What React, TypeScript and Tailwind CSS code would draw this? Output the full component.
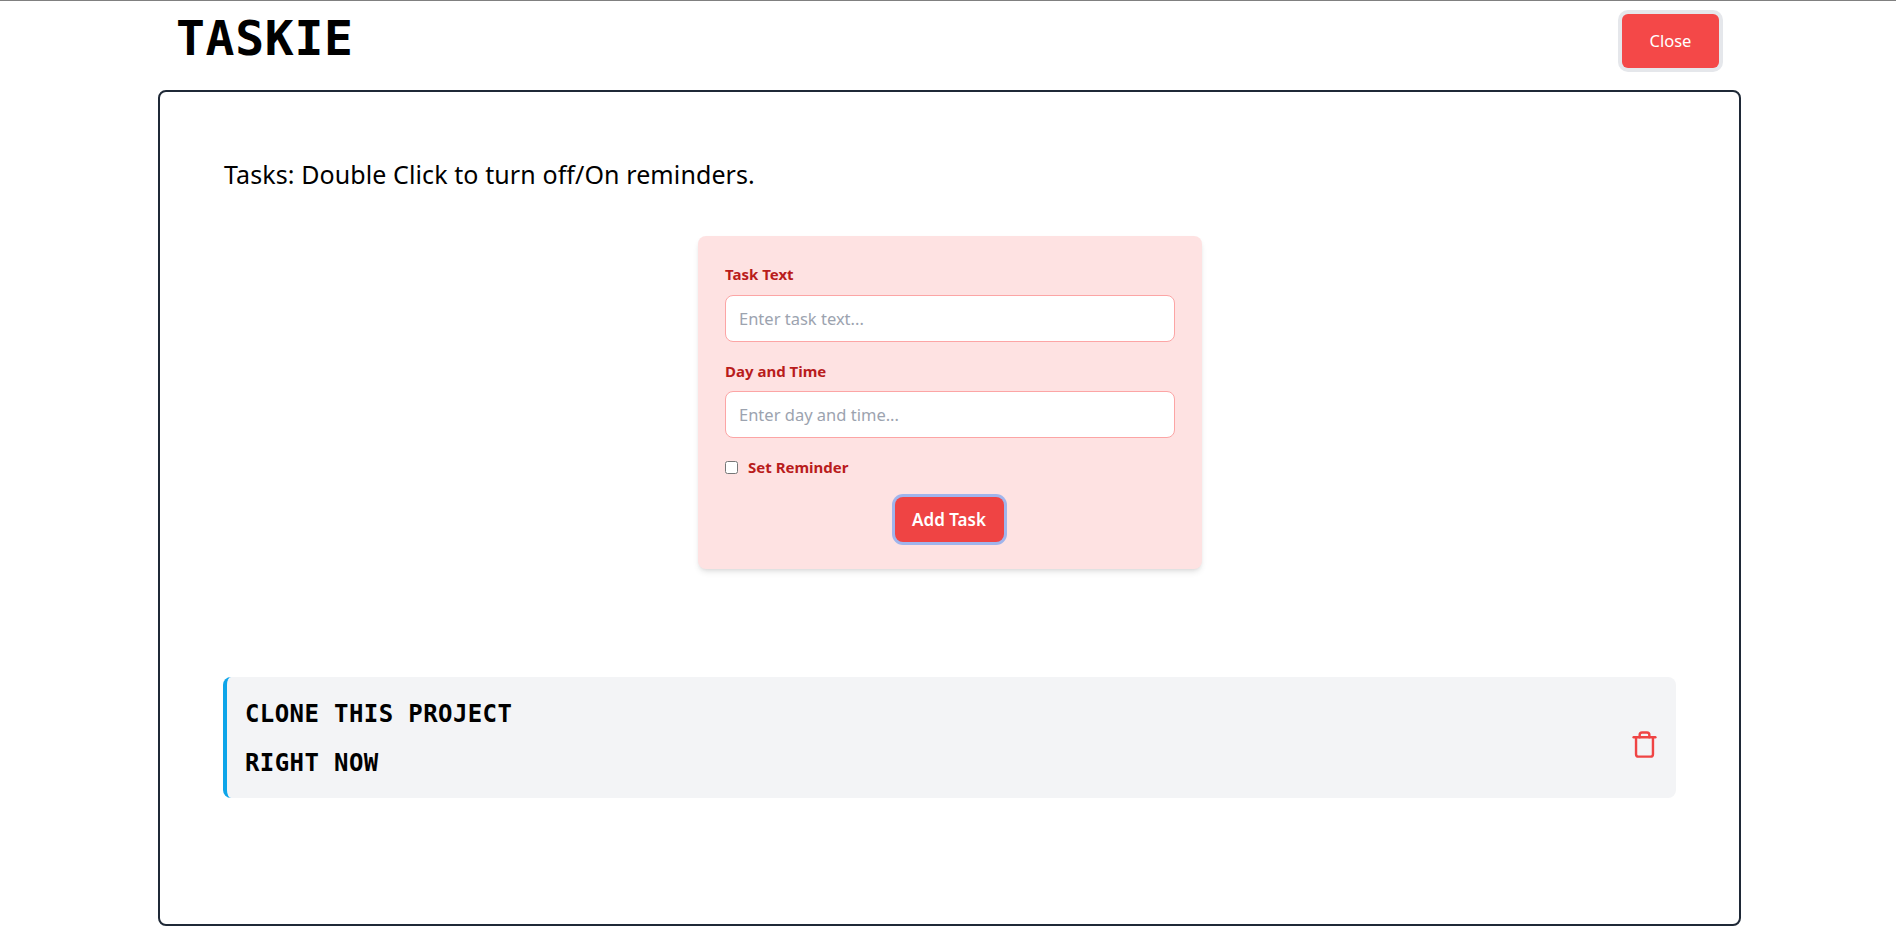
const sans = "font-['Noto_Sans','Open_Sans',sans-serif]";
const mono = "font-['DejaVu_Sans_Mono',monospace]";

function Field({ label, placeholder, inputClass }: { label: string; placeholder: string; inputClass: string }) {
  return (
    <div className="flex flex-col">
      <label className="text-[15px] leading-[21px] font-bold text-[#b91c1c]">{label}</label>
      <input
        placeholder={placeholder}
        className={`${inputClass} h-[47px] w-full rounded-lg border border-[#fca5a5] bg-white px-[13px] text-[16.5px] outline-none placeholder:text-[#9ca3af]`}
      />
    </div>
  );
}

function TrashIcon() {
  return (
    <svg className="mt-[13px]" width="29" height="29" viewBox="0 0 24 24" fill="none" stroke="#ef4444" strokeWidth="2" strokeLinecap="round" strokeLinejoin="round">
      <path d="M3 6h18" />
      <path d="M19 6v14a2 2 0 0 1-2 2H7a2 2 0 0 1-2-2V6" />
      <path d="M8 6V4a2 2 0 0 1 2-2h4a2 2 0 0 1 2 2v2" />
    </svg>
  );
}

export default function App() {
  return (
    <div className={`${sans} flex h-[934px] flex-col overflow-hidden border-t border-[#808080] bg-white text-black`}>
      <header className="ml-[158px] mr-[155px] flex h-[89px] items-start justify-between">
        <h1 className={`${mono} ml-[18px] mt-[9px] text-[48px] leading-[56px] font-bold tracking-[0.7px]`}>TASKIE</h1>
        <button className="mr-[22px] mt-[13px] h-[54px] w-[97px] rounded-md bg-[#f44848] text-[16.5px] text-white ring-4 ring-[#e5e7eb]">
          Close
        </button>
      </header>
      <main className="ml-[158px] mr-[155px] flex h-[836px] flex-col rounded-lg border-2 border-[#1f2937] pl-[64px] pr-[63px] pt-[66px]">
        <p className="text-[25px] leading-[32px] tracking-[0.1px]">Tasks: Double Click to turn off/On reminders.</p>
        <form className="mx-auto mt-[46px] h-[333px] w-[504px] rounded-lg bg-[#fee2e2] px-[27px] pt-[28px] shadow-md">
          <div className="flex flex-col gap-[19px]">
            <Field label="Task Text" placeholder="Enter task text..." inputClass="mt-[10px]" />
            <Field label="Day and Time" placeholder="Enter day and time..." inputClass="mt-[9px]" />
          </div>
          <div className="mt-[19px] flex h-[20px] items-center gap-[10px]">
            <input type="checkbox" className="h-[13px] w-[13px]" />
            <label className="text-[15px] leading-[20px] font-bold text-[#b91c1c]">Set Reminder</label>
          </div>
          <div className="mt-[20px] flex justify-center">
            <button type="button" className="mr-[2px] h-[45px] w-[109px] rounded-lg bg-[#ef4444] text-[17px] font-semibold text-white ring-[3px] ring-[#a0b5ec]">
              Add Task
            </button>
          </div>
        </form>
        <div className="-ml-[1px] mt-[108px] flex h-[121px] items-center justify-between rounded-lg border-l-4 border-[#0ea5e9] bg-[#f3f4f6] pl-[18px] pr-[17px]">
          <div className={`${mono} text-[24px] font-bold leading-[32px] tracking-[0.4px]`}>
            <p className="mt-[1px]">CLONE THIS PROJECT</p>
            <p className="mt-[17px]">RIGHT NOW</p>
          </div>
          <TrashIcon />
        </div>
      </main>
    </div>
  );
}
